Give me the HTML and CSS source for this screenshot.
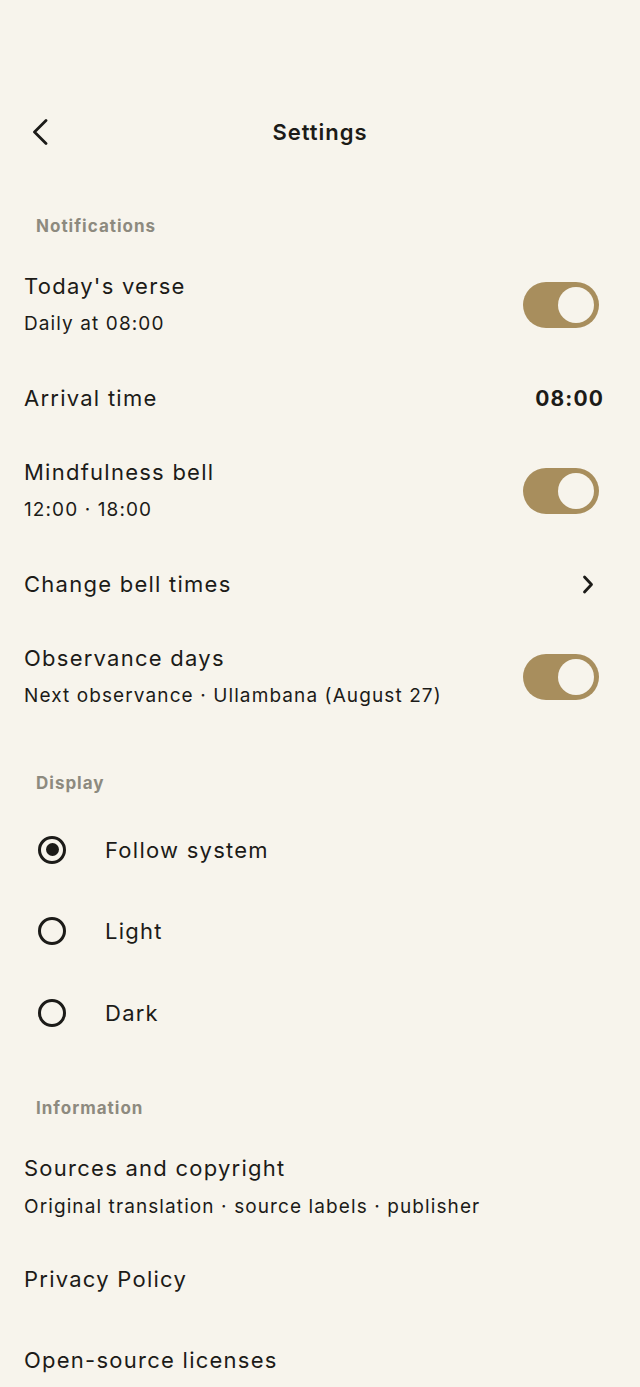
FILE: index.html
```html
<!DOCTYPE html>
<html lang="en">
<head>
<meta charset="utf-8">
<title>Settings</title>
<link rel="stylesheet" href="styles.css">
</head>
<body>
<div class="screen">
  <header class="topbar">
    <button class="back" aria-label="Back">
      <svg width="16" height="26" viewBox="0 0 16 26"><path d="M14 1.5 L2.5 13 L14 24.5" fill="none" stroke="#1c1b18" stroke-width="2.8" stroke-linecap="round" stroke-linejoin="round"/></svg>
    </button>
    <h1 class="title">Settings</h1>
  </header>

  <section class="section first">
    <div class="section-label">Notifications</div>
    <div class="row two">
      <div class="texts"><div class="row-title">Today's verse</div><div class="row-sub">Daily at 08:00</div></div>
      <div class="toggle"><span class="knob"></span></div>
    </div>
    <div class="row">
      <div class="texts"><div class="row-title">Arrival time</div></div>
      <div class="value">08:00</div>
    </div>
    <div class="row two">
      <div class="texts"><div class="row-title">Mindfulness bell</div><div class="row-sub">12:00 · 18:00</div></div>
      <div class="toggle"><span class="knob"></span></div>
    </div>
    <div class="row">
      <div class="texts"><div class="row-title">Change bell times</div></div>
      <svg class="chev" width="12" height="19" viewBox="0 0 12 19"><path d="M2.5 2 L9.5 9.5 L2.5 17" fill="none" stroke="#1c1b18" stroke-width="2.8" stroke-linecap="round" stroke-linejoin="round"/></svg>
    </div>
    <div class="row two">
      <div class="texts"><div class="row-title">Observance days</div><div class="row-sub">Next observance · Ullambana (August 27)</div></div>
      <div class="toggle"><span class="knob"></span></div>
    </div>
  </section>

  <section class="section">
    <div class="section-label">Display</div>
    <div class="radios">
      <div class="radio-row"><span class="radio on"></span><span class="radio-text">Follow system</span></div>
      <div class="radio-row"><span class="radio"></span><span class="radio-text">Light</span></div>
      <div class="radio-row"><span class="radio"></span><span class="radio-text">Dark</span></div>
    </div>
  </section>

  <section class="section info">
    <div class="section-label">Information</div>
    <div class="row two short">
      <div class="texts"><div class="row-title">Sources and copyright</div><div class="row-sub wide">Original translation · source labels · publisher</div></div>
    </div>
    <div class="row tall"><div class="texts"><div class="row-title">Privacy Policy</div></div></div>
    <div class="row tall"><div class="texts"><div class="row-title">Open-source licenses</div></div></div>
  </section>
</div>
</body>
</html>
```

FILE: styles.css
```css
* { box-sizing: border-box; }
html, body {
  margin: 0;
  padding: 0;
  background: #f7f4ec;
}
body {
  font-family: Inter, "Noto Sans", "Liberation Sans", sans-serif;
  color: #1c1b18;
  height: 1387px;
  overflow: hidden;
}
.screen {
  padding-top: 100px;
}
.topbar {
  position: relative;
  height: 64px;
  display: flex;
  align-items: center;
  justify-content: center;
}
.back {
  position: absolute;
  left: 32px;
  top: 19px;
  width: 18px;
  height: 26px;
  padding: 0;
  border: 0;
  background: none;
  display: flex;
}
.title {
  margin: 0;
  font-size: 22px;
  font-weight: 600;
  line-height: 30px;
  letter-spacing: 1px;
}
.section {
  padding-top: 40px;
}
.section.first {
  padding-top: 52px;
}
.section.info {
  padding-top: 44px;
}
.section-label {
  padding-left: 36px;
  font-size: 17px;
  font-weight: 700;
  line-height: 20px;
  color: #8d8a7f;
  letter-spacing: 1px;
  margin-bottom: 13px;
}
.row {
  display: flex;
  align-items: center;
  justify-content: space-between;
  padding: 22px 36px 22px 24px;
  min-height: 74px;
}
.row.short {
  padding-bottom: 17px;
}
.row.tall {
  min-height: 81px;
  padding-top: 0;
  padding-bottom: 0;
}
.texts {
  display: flex;
  flex-direction: column;
}
.row-title {
  font-size: 22px;
  line-height: 30px;
  letter-spacing: 1.25px;
}
.row-sub {
  font-size: 19px;
  line-height: 30px;
  margin-top: 8px;
  letter-spacing: 1.1px;
}
.row-sub.wide {
  margin-top: 9px;
}
.value {
  font-size: 21px;
  font-weight: 700;
  letter-spacing: 1.1px;
}
.toggle {
  width: 76px;
  height: 46px;
  border-radius: 23px;
  background: #a88e5d;
  display: flex;
  align-items: center;
  justify-content: flex-end;
  padding-right: 5px;
  margin-right: 5px;
}
.knob {
  width: 36px;
  height: 36px;
  border-radius: 50%;
  background: #f7f4ec;
}
.chev {
  margin-right: 10px;
}
.radios {
  padding-top: 3px;
}
.radio-row {
  height: 81.5px;
  display: flex;
  align-items: center;
  padding-left: 38px;
}
.radio {
  width: 28px;
  height: 28px;
  border-radius: 50%;
  border: 3px solid #1c1b18;
  display: flex;
  align-items: center;
  justify-content: center;
  margin-right: 39px;
}
.radio.on::after {
  content: "";
  width: 13px;
  height: 13px;
  border-radius: 50%;
  background: #1c1b18;
}
.radio-text {
  font-size: 22px;
  letter-spacing: 1.25px;
}
```
